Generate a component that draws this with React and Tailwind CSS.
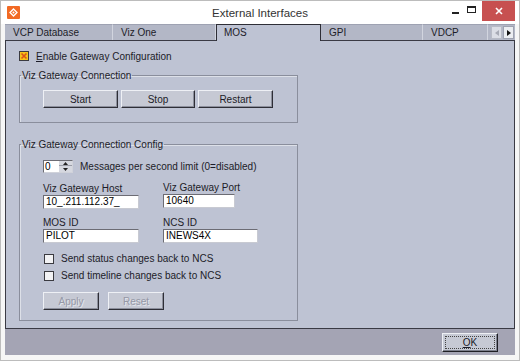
import React from 'react';

const btnBase =
  'h-[18px] flex items-center justify-center bg-[#c6c9d4] border border-t-[#eef0f5] border-l-[#eef0f5] border-b-[#2e2e36] border-r-[#2e2e36] shadow-[inset_-1px_-1px_0_#8c8f9c]';

const Check = ({ checked }) => (
  <svg width="10" height="10" viewBox="0 0 10 10" className="shrink-0">
    <rect x="0.5" y="0.5" width="9" height="9" fill={checked ? '#f4c21a' : '#f2f2f4'} stroke="#3a3a40" />
    {checked && <path d="M2.5 2.5 L7.5 7.5 M7.5 2.5 L2.5 7.5" stroke="#d9541a" strokeWidth="1.6" />}
  </svg>
);

const Field = ({ value, className }) => (
  <div
    className={`h-[14px] bg-white border border-t-[#6c6c74] border-l-[#6c6c74] border-b-[#c8cad2] border-r-[#c8cad2] pl-[2px] leading-[12px] text-black ${className}`}
  >
    {value}
  </div>
);

const Tab = ({ label, className, active }) =>
  active ? (
    <div
      className={`relative z-10 h-[17px] bg-[#bec3d3] border-t border-l border-r border-[#2e2e36] pl-[7px] leading-[16px] ${className}`}
    >
      {label}
    </div>
  ) : (
    <div
      className={`h-[16px] bg-[#b3b7c6] border-t border-[#9ea2b2] border-r border-r-[#d2d5df] pl-[8px] leading-[15px] ${className}`}
    >
      {label}
    </div>
  );

export default function App() {
  return (
    <div className="w-[520px] h-[361px] bg-[#f6f6f6] border border-[#bcbcbc] flex flex-col font-['Liberation_Sans',Arial,sans-serif] text-[10px] text-[#1c1c28]">
      {/* title bar */}
      <div className="h-[23px] grid grid-cols-[1fr_auto_1fr] items-start bg-white">
        <div className="pl-[6px] pt-[5px]">
          <svg width="13" height="13" viewBox="0 0 13 13">
            <rect width="13" height="13" rx="1" fill="#f26a24" />
            <path d="M6.5 3 L10 6.5 L6.5 10 L3 6.5 Z" fill="none" stroke="#fff" strokeWidth="1.3" />
            <circle cx="6.5" cy="6.5" r="1" fill="#fff" />
          </svg>
        </div>
        <div className="pt-[4px] text-[11.5px] leading-[16px] text-[#333]">External Interfaces</div>
        <div className="flex justify-end items-start">
          <div className="w-[16px] h-[20px] flex items-center justify-center">
            <div className="w-[7px] h-[2px] bg-[#222] mt-[3px]" />
          </div>
          <div className="w-[16px] h-[20px] flex items-start justify-center pt-[5px]">
            <div className="w-[9px] h-[7px] border border-t-2 border-[#222]" />
          </div>
          <div className="w-[33px] h-[20px] ml-[3px] mr-[4px] bg-[#c75050] flex items-center justify-center">
            <svg width="8" height="8" viewBox="0 0 8 8">
              <path d="M1 1 L7 7 M7 1 L1 7" stroke="#fff" strokeWidth="1.6" />
            </svg>
          </div>
        </div>
      </div>

      <div className="flex-1 flex flex-col px-[4px] pb-[5px]">
        {/* tabs */}
        <div className="h-[16px] flex items-start">
          <Tab label="VCP Database" className="w-[108px]" />
          <Tab label="Viz One" className="w-[103px]" />
          <Tab label="MOS" className="w-[105px]" active />
          <Tab label="GPI" className="w-[102px]" />
          <Tab label="VDCP" className="w-[65px]" />
          <div className="flex-1 h-[16px] bg-[#b3b7c6] border-t border-[#9ea2b2] flex items-center justify-end gap-[1px] pr-[1px]">
            <div className="w-[11px] h-[13px] bg-[#dcdee6] border border-[#b8bbc6] flex items-center justify-center">
              <svg width="4" height="6" viewBox="0 0 4 6"><path d="M4 0 L0 3 L4 6 Z" fill="#a8abb6" /></svg>
            </div>
            <div className="w-[11px] h-[13px] bg-[#eceef2] border border-[#9ea2b0] flex items-center justify-center">
              <svg width="4" height="6" viewBox="0 0 4 6"><path d="M0 0 L4 3 L0 6 Z" fill="#111" /></svg>
            </div>
          </div>
        </div>

        {/* panel */}
        <div className="h-[289px] bg-[#bec3d3] border border-[#3a3a44] pl-[13px] pt-[9px]">
          <div className="h-[12px] flex items-center gap-[7px]">
            <Check checked />
            <span>
              <span className="underline">E</span>nable Gateway Configuration
            </span>
          </div>

          <fieldset className="mt-[7px] w-[279px] border border-[#8a8e9c] shadow-[inset_1px_1px_0_#dde0e8]">
            <legend className="ml-[1px] px-[1px] leading-[13px]">Viz Gateway Connection</legend>
            <div className="pl-[23px] pt-[8px] pb-[14px] flex gap-[3px]">
              <div className={`${btnBase} w-[75px]`}>Start</div>
              <div className={`${btnBase} w-[74px]`}>Stop</div>
              <div className={`${btnBase} w-[75px]`}>Restart</div>
            </div>
          </fieldset>

          <fieldset className="mt-[15px] w-[279px] border border-[#8a8e9c] shadow-[inset_1px_1px_0_#dde0e8]">
            <legend className="ml-[1px] px-[1px] leading-[13px]">Viz Gateway Connection Config</legend>
            <div className="pl-[23px] pt-[9px] pb-[10px] flex flex-col">
              <div className="h-[13px] flex items-center gap-[7px]">
                <div className="w-[30px] h-[13px] flex border border-t-[#6c6c74] border-l-[#6c6c74] border-b-[#d0d2da] border-r-[#d0d2da]">
                  <div className="flex-1 bg-white pl-[1px] leading-[11px] text-black">0</div>
                  <div className="w-[13px] flex flex-col bg-[#d6d8e0]">
                    <div className="h-[5px] flex items-center justify-center border-b border-[#9a9ca6]">
                      <svg width="5" height="3" viewBox="0 0 5 3"><path d="M0 3 L2.5 0 L5 3 Z" fill="#222" /></svg>
                    </div>
                    <div className="flex-1 flex items-center justify-center">
                      <svg width="5" height="3" viewBox="0 0 5 3"><path d="M0 0 L2.5 3 L5 0 Z" fill="#222" /></svg>
                    </div>
                  </div>
                </div>
                <span>Messages per second limit (0=disabled)</span>
              </div>

              <div className="mt-[11px] flex gap-[24px]">
                <div className="flex flex-col w-[96px]">
                  <div className="h-[11px] leading-[10px]">Viz Gateway Host</div>
                  <Field value="10_.211.112.37_" className="w-[96px]" />
                </div>
                <div className="flex flex-col -mt-[1px]">
                  <div className="h-[11px] leading-[10px]">Viz Gateway Port</div>
                  <Field value="10640" className="w-[72px]" />
                </div>
              </div>

              <div className="mt-[9px] flex gap-[24px]">
                <div className="flex flex-col w-[96px]">
                  <div className="h-[11px] leading-[10px]">MOS ID</div>
                  <Field value="PILOT" className="w-[96px]" />
                </div>
                <div className="flex flex-col">
                  <div className="h-[11px] leading-[10px]">NCS ID</div>
                  <Field value="INEWS4X" className="w-[95px]" />
                </div>
              </div>

              <div className="mt-[9px] h-[13px] flex items-center gap-[7px] pl-[1px]">
                <Check />
                <span>Send status changes back to NCS</span>
              </div>
              <div className="mt-[4px] h-[13px] flex items-center gap-[7px] pl-[1px]">
                <Check />
                <span>Send timeline changes back to NCS</span>
              </div>

              <div className="mt-[10px] flex gap-[9px]">
                <div className={`${btnBase} w-[56px] text-[#9598a6] [text-shadow:1px_1px_0_#e4e6ec]`}>Apply</div>
                <div className={`${btnBase} w-[56px] text-[#9598a6] [text-shadow:1px_1px_0_#e4e6ec]`}>Reset</div>
              </div>
            </div>
          </fieldset>
        </div>

        {/* bottom bar */}
        <div className="flex-1 bg-[#a4a4b4] flex items-start justify-end pr-[17px] pt-[4px]">
          <div className="w-[56px] h-[19px] p-[2px] bg-[#c6c9d4] border border-t-[#eef0f5] border-l-[#eef0f5] border-b-[#1e1e24] border-r-[#1e1e24] shadow-[inset_-1px_-1px_0_#7c7f8c]">
            <div className="h-full border border-dotted border-[#444] flex items-center justify-center leading-[11px]">
              <span>
                <span className="underline">O</span>K
              </span>
            </div>
          </div>
        </div>
      </div>
    </div>
  );
}
